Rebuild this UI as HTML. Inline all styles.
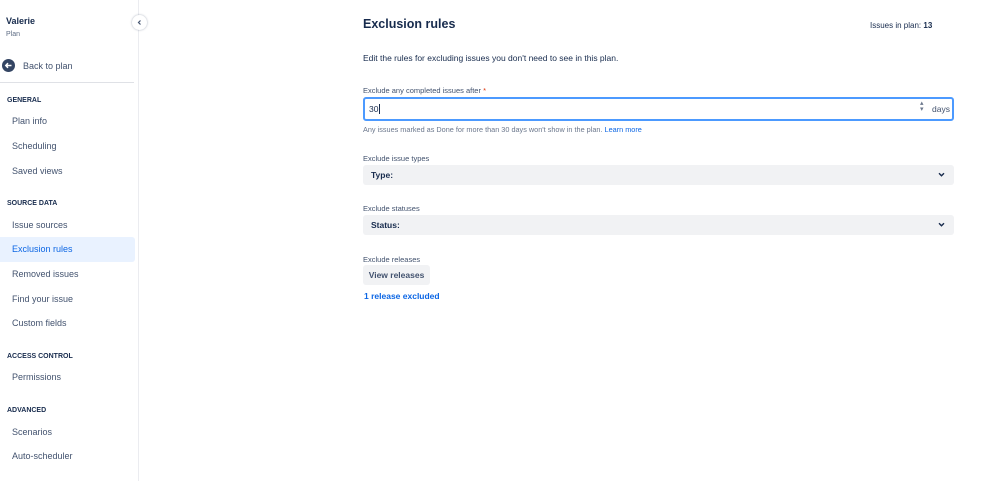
<!DOCTYPE html>
<html><head><meta charset="utf-8"><style>
*{box-sizing:border-box;margin:0;padding:0}
body{width:999px;height:481px;overflow:hidden;background:#fff;font-family:"Liberation Sans",sans-serif;color:#172b4d;position:relative}
.abs{position:absolute;white-space:nowrap}
.side{position:absolute;left:0;top:0;width:139px;height:481px;border-right:1px solid #ebecf0;background:#fff}
.nav{position:absolute;left:12px;font-size:9px;color:#42526e}
.h{position:absolute;left:7px;font-size:7px;font-weight:bold;color:#172b4d}
.lbl{position:absolute;left:363px;font-size:7.5px;color:#42526e}
.sel{position:absolute;left:363px;width:591px;height:20px;background:#f1f2f4;border-radius:3px}
.sel b{position:absolute;left:8px;top:5px;font-size:8.5px;color:#172b4d}
.chev{position:absolute;right:9px;top:6px;width:7px;height:7px}
</style></head><body>
<div class="side">
<div class="abs" style="left:6px;top:16px;font-size:9px;font-weight:bold">Valerie</div>
<div class="abs" style="left:6px;top:31px;font-size:7px;color:#5e6c84">Plan</div>
<svg class="abs" style="left:2px;top:59px" width="13" height="13" viewBox="0 0 13 13"><circle cx="6.5" cy="6.5" r="6.5" fill="#344563"/><path d="M9.5 6.5H4M6 4.2L3.8 6.5 6 8.8" stroke="#fff" stroke-width="1.5" fill="none"/></svg>
<div class="abs" style="left:23px;top:61px;font-size:9px;color:#42526e">Back to plan</div>
<div class="abs" style="left:0;top:82px;width:134px;height:1px;background:#dfe1e6"></div>
<div class="h" style="top:97px">GENERAL</div>
<div class="nav" style="top:116px">Plan info</div>
<div class="nav" style="top:141px">Scheduling</div>
<div class="nav" style="top:166px">Saved views</div>
<div class="h" style="top:200px">SOURCE DATA</div>
<div class="nav" style="top:220px">Issue sources</div>
<div class="abs" style="left:0;top:237px;width:135px;height:25px;background:#e9f2ff;border-radius:0 3px 3px 0"></div>
<div class="nav" style="top:244px;color:#0c66e4">Exclusion rules</div>
<div class="nav" style="top:269px">Removed issues</div>
<div class="nav" style="top:294px">Find your issue</div>
<div class="nav" style="top:318px">Custom fields</div>
<div class="h" style="top:353px">ACCESS CONTROL</div>
<div class="nav" style="top:372px">Permissions</div>
<div class="h" style="top:407px">ADVANCED</div>
<div class="nav" style="top:427px">Scenarios</div>
<div class="nav" style="top:451px">Auto-scheduler</div>
</div>
<div class="abs" style="left:132px;top:15px;width:15px;height:15px;border-radius:50%;background:#fff;box-shadow:0 0 2px rgba(9,30,66,.35)"></div>
<svg class="abs" style="left:137px;top:20px" width="5" height="5" viewBox="0 0 5 5"><path d="M3.5 0.5L1.5 2.5 3.5 4.5" stroke="#42526e" stroke-width="1.2" fill="none"/></svg>

<div class="abs" style="left:363px;top:17px;font-size:12.5px;font-weight:bold;color:#172b4d">Exclusion rules</div>
<div class="abs" style="left:870px;top:21px;font-size:8px;color:#172b4d">Issues in plan: <b>13</b></div>
<div class="abs" style="left:363px;top:53px;font-size:8.5px;color:#172b4d">Edit the rules for excluding issues you don't need to see in this plan.</div>

<div class="lbl" style="top:86px">Exclude any completed issues after<span style="color:#de350b"> *</span></div>
<div class="abs" style="left:363px;top:97px;width:591px;height:24px;border:2px solid #4c9aff;border-radius:3px;background:#fff"></div>
<div class="abs" style="left:369px;top:104px;font-size:8.5px;color:#172b4d">30<span style="border-left:1px solid #172b4d;margin-left:1px"></span></div>
<div class="abs" style="left:920px;top:101px;font-size:7px;color:#6b778c;line-height:6px">▴<br>▾</div>
<div class="abs" style="left:932px;top:104px;font-size:8.5px;color:#42526e">days</div>
<div class="abs" style="left:363px;top:125px;font-size:7.3px;color:#6b778c">Any issues marked as Done for more than 30 days won't show in the plan. <span style="color:#0c66e4">Learn more</span></div>

<div class="lbl" style="top:154px">Exclude issue types</div>
<div class="sel" style="top:165px"><b>Type:</b><svg class="chev" viewBox="0 0 7 7"><path d="M1 2.3L3.5 4.8 6 2.3" stroke="#172b4d" stroke-width="1.4" fill="none"/></svg></div>
<div class="lbl" style="top:204px">Exclude statuses</div>
<div class="sel" style="top:215px"><b>Status:</b><svg class="chev" viewBox="0 0 7 7"><path d="M1 2.3L3.5 4.8 6 2.3" stroke="#172b4d" stroke-width="1.4" fill="none"/></svg></div>
<div class="lbl" style="top:255px">Exclude releases</div>
<div class="abs" style="left:363px;top:265px;width:67px;height:20px;background:#f1f2f4;border-radius:3px;font-size:8.5px;font-weight:bold;color:#42526e;text-align:center;line-height:20px">View releases</div>
<div class="abs" style="left:364px;top:291px;font-size:8.5px;font-weight:bold;color:#0c66e4">1 release excluded</div>
</body></html>
